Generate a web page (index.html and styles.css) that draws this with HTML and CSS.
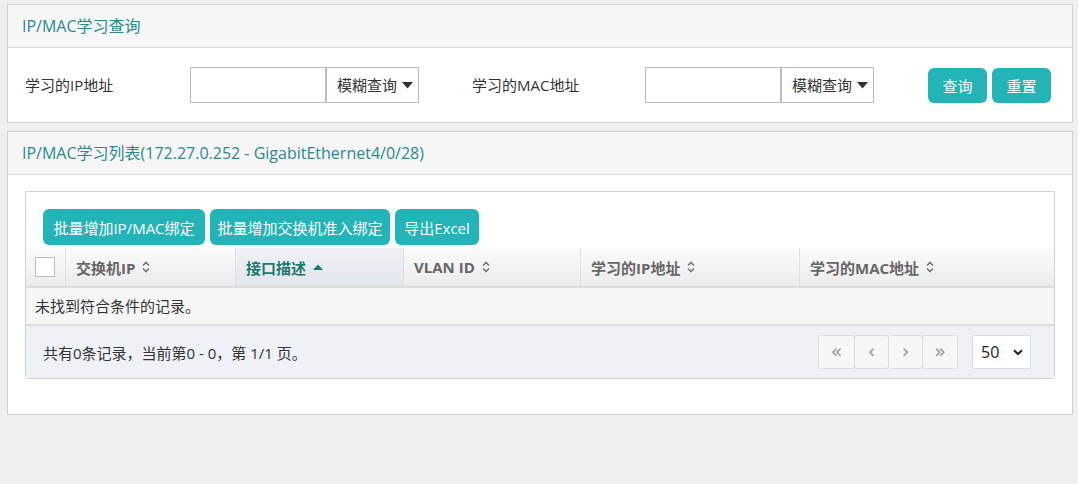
FILE: index.html
```html
<!DOCTYPE html>
<html lang="zh-CN">
<head>
<meta charset="utf-8">
<title>IP/MAC学习查询</title>
<link rel="stylesheet" href="styles.css">
</head>
<body>
<div class="panel">
  <div class="panel-head">IP/MAC学习查询</div>
  <div class="panel-body query">
    <label class="lbl lbl1">学习的IP地址</label>
    <div class="igroup">
      <input class="ipt" type="text">
      <div class="dd">模糊查询<svg class="caret" width="11" height="7" viewBox="0 0 11 7"><path d="M0 0H11L5.5 6.5Z" fill="#333"/></svg></div>
    </div>
    <label class="lbl lbl2">学习的MAC地址</label>
    <div class="igroup">
      <input class="ipt" type="text">
      <div class="dd">模糊查询<svg class="caret" width="11" height="7" viewBox="0 0 11 7"><path d="M0 0H11L5.5 6.5Z" fill="#333"/></svg></div>
    </div>
    <div class="actions">
      <button class="btn btn-q">查询</button>
      <button class="btn btn-q">重置</button>
    </div>
  </div>
</div>

<div class="panel">
  <div class="panel-head">IP/MAC学习列表(172.27.0.252 - GigabitEthernet4/0/28)</div>
  <div class="panel-body list">
    <div class="tbl-wrap">
      <div class="toolbar">
        <button class="btn w1">批量增加IP/MAC绑定</button>
        <button class="btn w2">批量增加交换机准入绑定</button>
        <button class="btn w3">导出Excel</button>
      </div>
      <div class="thead">
        <div class="th c0"><span class="chk"></span></div>
        <div class="th c1">交换机IP<svg class="sort" width="8" height="12" viewBox="0 0 8 12"><path d="M1 4.5L4 1.5L7 4.5M1 7.5L4 10.5L7 7.5" fill="none" stroke="#777" stroke-width="1.6"/></svg></div>
        <div class="th c2 sorted">接口描述<svg class="sort" width="10" height="7" viewBox="0 0 10 7"><path d="M0 6H10L5 0.5Z" fill="#1d7a6c"/></svg></div>
        <div class="th c3">VLAN ID<svg class="sort" width="8" height="12" viewBox="0 0 8 12"><path d="M1 4.5L4 1.5L7 4.5M1 7.5L4 10.5L7 7.5" fill="none" stroke="#777" stroke-width="1.6"/></svg></div>
        <div class="th c4">学习的IP地址<svg class="sort" width="8" height="12" viewBox="0 0 8 12"><path d="M1 4.5L4 1.5L7 4.5M1 7.5L4 10.5L7 7.5" fill="none" stroke="#777" stroke-width="1.6"/></svg></div>
        <div class="th c5">学习的MAC地址<svg class="sort" width="8" height="12" viewBox="0 0 8 12"><path d="M1 4.5L4 1.5L7 4.5M1 7.5L4 10.5L7 7.5" fill="none" stroke="#777" stroke-width="1.6"/></svg></div>
      </div>
      <div class="empty">未找到符合条件的记录。</div>
      <div class="tfoot">
        <span class="info">共有0条记录，当前第0 - 0，第 1/1 页。</span>
        <div class="pager">
          <span class="pg">«</span><span class="pg">‹</span><span class="pg">›</span><span class="pg">»</span>
        </div>
        <div class="psize">50<svg class="chev" width="10" height="7" viewBox="0 0 10 7"><path d="M1 1.2L5 5L9 1.2" fill="none" stroke="#222" stroke-width="2"/></svg></div>
      </div>
    </div>
  </div>
</div>
</body>
</html>
```
FILE: styles.css
```css
* { box-sizing: border-box; }
html, body { margin: 0; }
body {
  background: #efefef;
  padding: 4px 5px 0 7px;
  font-family: "Open Sans", "Noto Sans CJK SC", sans-serif;
  font-size: 15px;
  color: #333;
  height: 484px;
  overflow: hidden;
}
.panel {
  background: #fff;
  border: 1px solid #d2d2d2;
  margin-bottom: 8px;
}
.panel-head {
  height: 43px;
  line-height: 42px;
  padding-left: 14px;
  background: #f6f6f6;
  border-bottom: 1px solid #dcdcdc;
  color: #2a8a8f;
  font-size: 16px;
}
.query {
  display: flex;
  align-items: center;
  padding: 19px 0 19px 17px;
}
.lbl { color: #333; line-height: 36px; }
.lbl1 { width: 165px; }
.lbl2 { width: 173px; margin-left: 53px; }
.igroup { display: flex; height: 36px; }
.ipt {
  width: 135px;
  height: 36px;
  border: 1px solid #bdbdbd;
  border-right: 0;
  margin: 0;
  padding: 0 6px;
  font: inherit;
  outline: none;
}
.dd {
  width: 94px;
  height: 36px;
  border: 1px solid #bdbdbd;
  border-left: 2px solid #bdbdbd;
  display: flex;
  align-items: center;
  padding-left: 10px;
  color: #333;
  line-height: 1;
}
.caret { margin-left: 5px; }
.actions { display: flex; gap: 5px; margin-left: 54px; }
.btn {
  border: 0;
  background: #23b4b7;
  color: #fff;
  border-radius: 6px;
  height: 35px;
  font: inherit;
  font-size: 15px;
  padding: 0;
  cursor: pointer;
}
.btn-q { width: 59px; }
.list { padding: 16px 17px 35px 17px; }
.tbl-wrap {
  border: 1px solid #d0d0d0;
  border-radius: 0 0 3px 3px;
}
.toolbar {
  display: flex;
  gap: 5px;
  padding: 17px 0 3px 17px;
}
.w1 { width: 162px; height: 36px; }
.w2 { width: 180px; height: 36px; }
.w3 { width: 84px; height: 36px; }
.thead {
  display: flex;
  height: 40px;
  background: linear-gradient(#fbfbfb, #ececec);
  border-bottom: 2px solid #dcdcdc;
}
.th {
  display: flex;
  align-items: center;
  padding-left: 10px;
  font-weight: bold;
  color: #666;
  border-left: 1px solid #e0e0e0;
  font-size: 15px;
}
.th .sort { margin-left: 7px; }
.c0 { width: 39px; border-left: 0; padding-left: 9px; }
.c1 { width: 170px; }
.c2 { width: 168px; }
.c3 { width: 177px; }
.c4 { width: 219px; }
.c5 { flex: 1; }
.sorted { background: linear-gradient(#eef1f5, #e2e6ed); color: #1d7a6c; }
.chk {
  width: 20px;
  height: 20px;
  background: #fff;
  border: 1px solid #bcbcbc;
  display: block;
}
.empty {
  height: 38px;
  line-height: 36px;
  padding-left: 9px;
  background: #f6f6f6;
  border-bottom: 2px solid #dedede;
  color: #333;
}
.tfoot {
  display: flex;
  align-items: center;
  height: 52px;
  background: #eef1f6;
  padding: 0 23px 0 17px;
}
.info { flex: 1; color: #333; }
.pager { display: flex; }
.pg {
  width: 35px;
  height: 34px;
  border: 1px solid #dcdcdc;
  background: #f7f7f7;
  color: #999;
  display: flex;
  align-items: center;
  justify-content: center;
  font-size: 19px;
  font-family: "DejaVu Sans", sans-serif;
  margin-left: -1px;
  border-radius: 3px;
  padding-bottom: 2px;
}
.pg:first-child { width: 37px; margin-left: 0; }
.pg:last-child { width: 36px; }
.psize {
  margin-left: 14px;
  width: 59px;
  height: 34px;
  background: #fff;
  border: 1px solid #dcdcdc;
  border-radius: 2px;
  display: flex;
  align-items: center;
  padding-left: 8px;
  font-size: 16px;
  color: #222;
}
.chev { margin-left: 14px; }
```
